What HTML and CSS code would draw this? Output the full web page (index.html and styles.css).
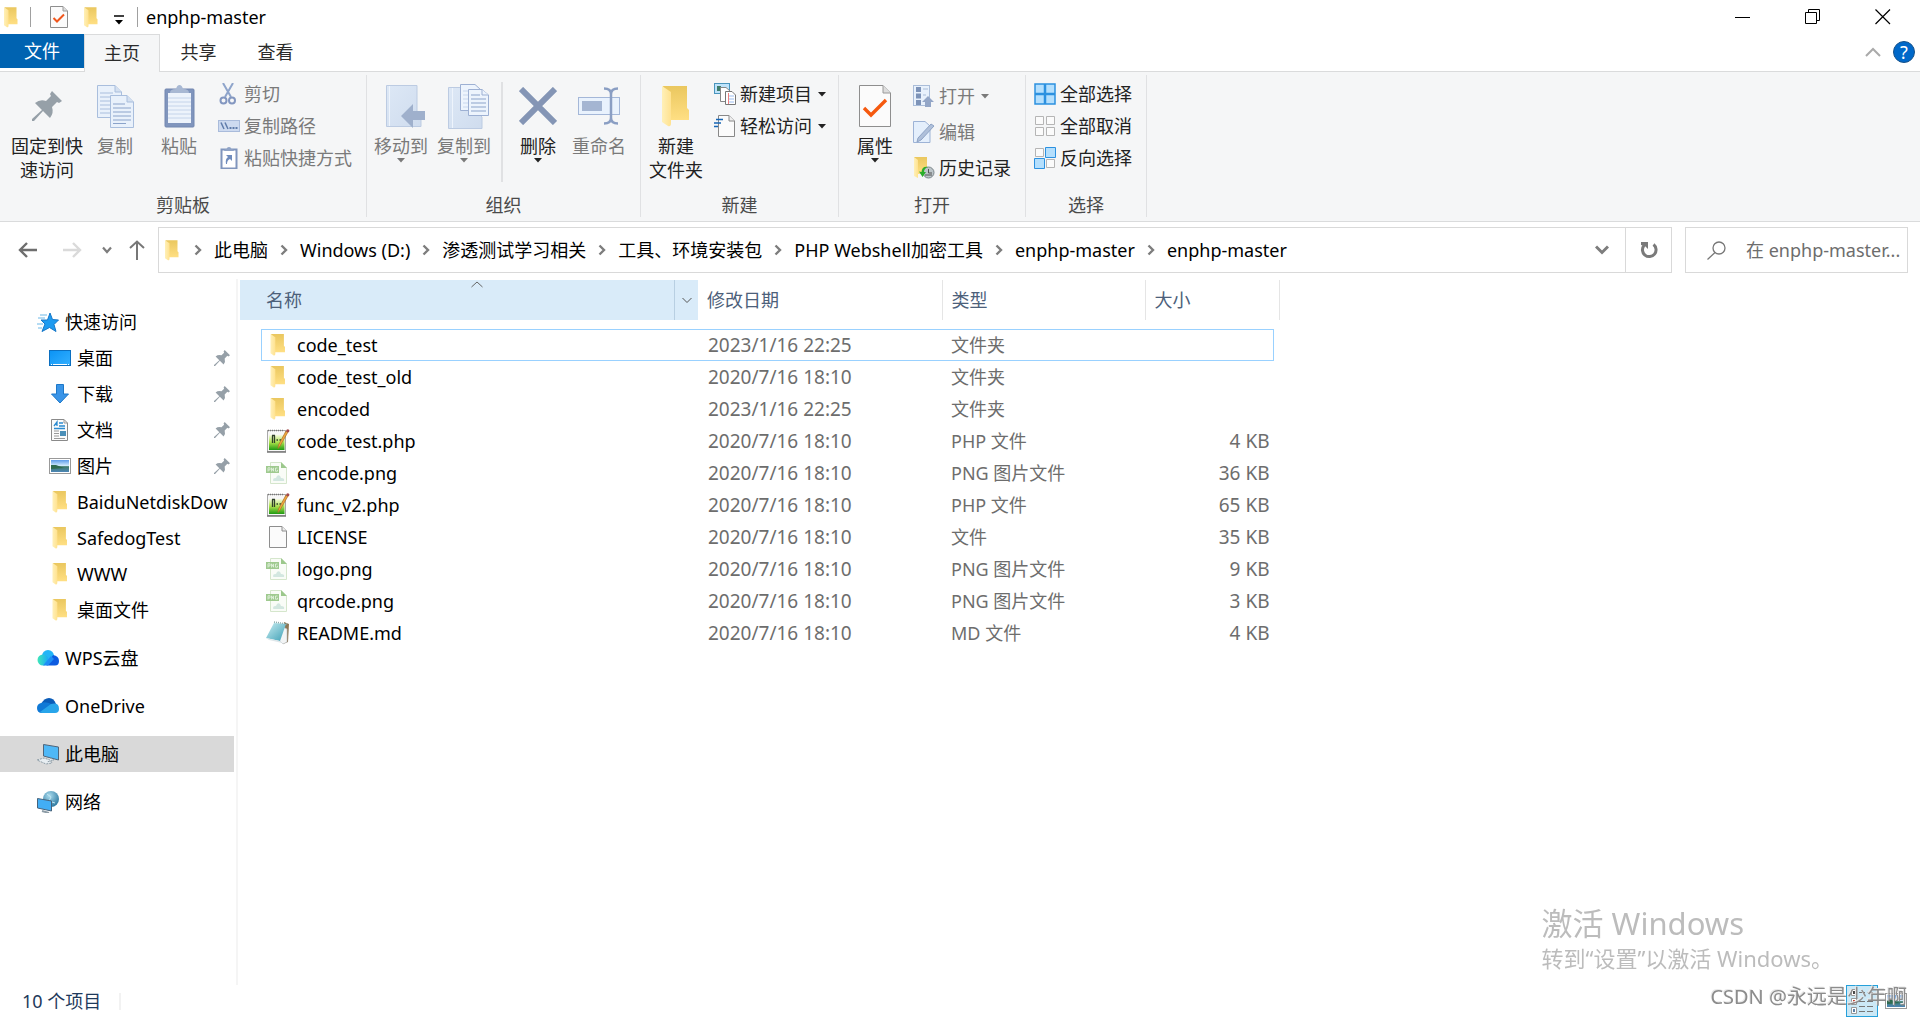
FILE: index.html
```html
<!DOCTYPE html>
<html lang="zh-CN">
<head>
<meta charset="utf-8">
<meta name="viewport" content="width=device-width, initial-scale=1">
<title>enphp-master</title>
<link rel="stylesheet" href="styles.css">
</head>
<body>
<svg class="defs" width="0" height="0" aria-hidden="true">
  <defs>
    <linearGradient id="gBack" x1="0" y1="0" x2="0" y2="1"><stop offset="0" stop-color="#eac75f"/><stop offset="1" stop-color="#ffdf83"/></linearGradient>
    <linearGradient id="gFlap" x1="0" y1="0" x2="1" y2="0"><stop offset="0" stop-color="#fff0b8"/><stop offset="1" stop-color="#ffe290"/></linearGradient>
    <linearGradient id="gBlue" x1="0" y1="0" x2="1" y2="1"><stop offset="0" stop-color="#0a93f5"/><stop offset="1" stop-color="#35b0ff"/></linearGradient>
    <linearGradient id="gGreen" x1="0" y1="0" x2="0" y2="1"><stop offset="0" stop-color="#f6fbe0"/><stop offset=".5" stop-color="#a9e04a"/><stop offset="1" stop-color="#1f9a12"/></linearGradient>
    <linearGradient id="gSky" x1="0" y1="0" x2="0" y2="1"><stop offset="0" stop-color="#5b9bea"/><stop offset=".5" stop-color="#d8efff"/><stop offset=".55" stop-color="#3f7a6a"/><stop offset="1" stop-color="#4d86b8"/></linearGradient>
    <linearGradient id="gPale" x1="0" y1="0" x2="1" y2="1"><stop offset="0" stop-color="#dde8f6"/><stop offset="1" stop-color="#cfdcee"/></linearGradient>
    <linearGradient id="gWps" x1="0" y1="0" x2="1" y2="0"><stop offset="0" stop-color="#3fe8b8"/><stop offset="1" stop-color="#1aa8f8"/></linearGradient>
    <linearGradient id="gPad" x1="0" y1="0" x2="1" y2="1"><stop offset="0" stop-color="#c9eef2"/><stop offset="1" stop-color="#3d9fb5"/></linearGradient>
    <radialGradient id="gGlobe" cx=".4" cy=".3" r=".8"><stop offset="0" stop-color="#a9dbee"/><stop offset="1" stop-color="#1f6d96"/></radialGradient>
  </defs>
  <symbol id="folder" viewBox="0 0 28 41"><path d="M1 0H25V22L27 24V34H8Z" fill="url(#gBack)"/><path d="M0 0L9 6V37Q9 41 6 40L0 36Z" fill="url(#gFlap)"/></symbol>
  <symbol id="pin" viewBox="0 0 30 30"><path d="M20 0L30 10L27 12L25 11L20 16Q22 22 18 27L11 20L2 30L0 30L0 28L10 19L3 12Q8 8 14 10L19 5L18 3Z" fill="#96a0a8"/></symbol>
  <symbol id="caret" viewBox="0 0 8 5"><path d="M0 0H8L4 4.500Z" fill="currentColor"/></symbol>
  <symbol id="chev" viewBox="0 0 8 12"><path d="M1.500 1.500L6 6L1.500 10.500" fill="none" stroke="#7d7d7d" stroke-width="2.400"/></symbol>
  <symbol id="props" viewBox="0 0 32 42"><path d="M.5.500H24L31.500 8V41.500H.5Z" fill="#fbfbfb" stroke="#8e8e8e"/><path d="M24 .5V8H31.500" fill="#ddd" stroke="#9a9a9a"/><path d="M5 23L12 30L27 15" fill="none" stroke="#f5590f" stroke-width="3.400"/></symbol>
  <symbol id="propsSmall" viewBox="0 0 18 22"><path d="M.5.500H13L17.500 5V21.500H.5Z" fill="#fbfbfb" stroke="#8e8e8e"/><path d="M13 .5V5H17.500" fill="#ddd" stroke="#9a9a9a"/><path d="M3.500 12L7 15.500L14 8.500" fill="none" stroke="#f0561c" stroke-width="2"/></symbol>
  <symbol id="page" viewBox="0 0 18 22"><path d="M.5.500H13L17.500 5V21.500H.5Z" fill="#fbfbfb" stroke="#8e8e8e"/><path d="M13 .5V5H17.500" fill="#eee" stroke="#8e8e8e"/></symbol>
  <symbol id="php" viewBox="0 0 24 24"><rect x="1.500" y="1.500" width="18" height="21" fill="#f7f7f7" stroke="#aaa"/><path d="M2 1.500H17" stroke="#777" stroke-width="1.500" stroke-dasharray="1 1"/><rect x="3" y="6" width="15.500" height="15" fill="url(#gGreen)"/><path d="M6.500 6.500V14M8.500 6.500V14M6 6.500H9M10.500 11H12M13.500 11H15" stroke="#30402a" stroke-width="1.300"/><path d="M22 3L14 17L12 19.500L12.500 16L20 2Z" fill="#f2a73d" stroke="#a8702a" stroke-width=".7"/><circle cx="21.800" cy="1.800" r="1.600" fill="#a34a4a"/><path d="M1 23H20" stroke="#777" stroke-width="1.500"/></symbol>
  <symbol id="png" viewBox="0 0 24 24"><path d="M4.500 1.500H15L20.500 7V22.500H4.500Z" fill="#f9fcf7" stroke="#d5e6cc"/><path d="M15 1V7H21Z" fill="#9cc88c"/><rect x="0" y="5" width="13" height="7" fill="#9fca8f"/><path d="M2 10.500V6.800H4V9H2M5.500 10.500V6.800L7.500 10.200V6.800M11.500 7H9.500V10.200H11.500V8.800" stroke="#e9f5e4" fill="none" stroke-width=".8"/><path d="M8 20Q6 20 8 17Q10 18 11 15Q14 13 15 17Q19 17 18 20Z" fill="#d3e7e0"/></symbol>
  <symbol id="md" viewBox="0 0 24 24"><path d="M18 1L23 3L22 21L17 23Z" fill="#8d7654"/><path d="M15 5L21 8V21L17 23L13 19Z" fill="#f2f4f5" stroke="#b8c0c4" stroke-width=".6"/><path d="M8 2L20 3L14 20L0 17Z" fill="url(#gPad)"/><path d="M8 1L21 3" stroke="#8aa" stroke-width="1.500" stroke-dasharray="1 1"/><path d="M0 17L14 20L16 22L3 19Z" fill="#dfe7ea"/></symbol>
  <symbol id="picture" viewBox="0 0 22 16"><rect x=".5" y=".5" width="21" height="15" fill="#fff" stroke="#999"/><rect x="2" y="2" width="18" height="12" fill="url(#gSky)"/><path d="M2 7L7 7L15 10L2 11Z" fill="#2f6b50"/></symbol>
</svg>

<header class="titlebar">
  <svg class="i-folder"><use href="#folder"/></svg>
  <span class="bar-sep after-app"></span>
  <button class="plain quick" aria-label="属性"><svg width="18" height="22"><use href="#propsSmall"/></svg></button>
  <button class="plain quick" aria-label="新建文件夹"><svg class="i-folder"><use href="#folder"/></svg></button>
  <button class="plain customize" aria-label="自定义快速访问工具栏"><svg width="10" height="10" viewBox="0 0 10 10"><path d="M0 1H10" stroke="#000" stroke-width="1.500"/><path d="M1 5H9L5 9.500Z"/></svg></button>
  <span class="bar-sep"></span>
  <h1 class="title">enphp-master</h1>
  <div class="window-controls">
    <button class="plain" aria-label="最小化"><svg width="16" height="16" viewBox="0 0 16 16"><path d="M0 8.500H15" stroke="#000"/></svg></button>
    <button class="plain" aria-label="向下还原"><svg width="16" height="16" viewBox="0 0 16 16" fill="none" stroke="#000"><path d="M.5 3.500H11.500V14.500H.5ZM3.500 3V.5H14.500V11.500H12"/></svg></button>
    <button class="plain" aria-label="关闭"><svg width="16" height="16" viewBox="0 0 16 16"><path d="M.5.500L15 15M15 .5L.5 15" stroke="#000" stroke-width="1.200"/></svg></button>
  </div>
</header>

<nav class="tabs" aria-label="功能区">
  <button class="tab file">文件</button>
  <button class="tab active">主页</button>
  <button class="tab">共享</button>
  <button class="tab">查看</button>
  <div class="tab-tools">
    <button class="plain" aria-label="最小化功能区"><svg width="16" height="10" viewBox="0 0 16 10"><path d="M1 9L8 2L15 9" fill="none" stroke="#aaa" stroke-width="2"/></svg></button>
    <button class="plain help" aria-label="帮助">?</button>
  </div>
</nav>

<section class="ribbon">
  <div class="group clipboard">
    <div class="tools">
      <button class="big"><span class="art"><svg width="30" height="30"><use href="#pin"/></svg></span><span>固定到快<br>速访问</span></button>
      <button class="big off"><span class="art"><svg width="37" height="43" viewBox="0 0 37 43"><g fill="#e9f1fb" stroke="#a9bedd"><path d="M.5.500H18L24.500 7V32.500H.5Z"/><path d="M18 .5V7H24.500" fill="#d4e0f0"/><path d="M3 8H16M3 12H16M3 16H14M3 20H14M3 24H14M3 28H14"/><path d="M13.500 10.500H30L36.500 17V42.500H13.500Z"/><path d="M30 10.500V17H36.500" fill="#d4e0f0"/><path d="M16 19H28M16 23H34M16 27H34M16 31H34M16 35H34M16 38.500H29" stroke="#8ba3ca"/></g></svg></span><span>复制</span></button>
      <button class="big off"><span class="art"><svg width="31" height="43" viewBox="0 0 31 43"><rect x="1" y="4" width="29" height="38" rx="1" fill="#8095bd" stroke="#7387b0"/><rect x="4" y="8" width="23" height="30" fill="#edf3fb"/><path d="M4 13H27M4 17H27M4 21H27M4 25H27M4 29H27M4 33H27" stroke="#c5d4ea"/><path d="M6 8Q6 4 12 4Q13 0 15.500 0Q18 0 19 4Q25 4 25 8Z" fill="#a8b8d3"/></svg></span><span>粘贴</span></button>
      <div class="list">
        <button class="small off"><svg width="22" height="22" viewBox="0 0 22 22"><path d="M5 0L13 14M15 0L7 14" stroke="#8fa5cb" stroke-width="2"/><circle cx="5.500" cy="17.500" r="3" fill="none" stroke="#8397c0" stroke-width="2"/><circle cx="14" cy="17.500" r="3" fill="none" stroke="#8397c0" stroke-width="2"/></svg>剪切</button>
        <button class="small off"><svg width="22" height="22" viewBox="0 0 22 22"><rect x=".5" y="5.500" width="21" height="11" fill="#cddaf0" stroke="#a9bbdb"/><path d="M3 7.500L6 14M7 7.500L10 14" stroke="#5f7cab" stroke-width="1.500"/><path d="M11.500 13H20" stroke="#5f7cab" stroke-width="2" stroke-dasharray="2 1"/></svg>复制路径</button>
        <button class="small off"><svg width="22" height="22" viewBox="0 0 22 22"><rect x="3.500" y="2.500" width="15" height="19" fill="#fff" stroke="#8095bd" stroke-width="2"/><path d="M6 4Q6 2 8.500 2Q9 0 11 0Q13 0 13.500 2Q16 2 16 4Z" fill="#8fa3c6"/><path d="M8 8H14V14L12 12Q9 13 9 17H8Q7 12 10 10Z" fill="#6f8cbd"/></svg>粘贴快捷方式</button>
      </div>
    </div>
    <div class="group-name">剪贴板</div>
  </div>

  <div class="group organize">
    <div class="tools">
      <button class="big off"><span class="art wide"><svg width="40" height="44" viewBox="0 0 40 44"><path d="M.5 1.500H31V27L35 31V42.500H.5Z" fill="url(#gPale)" stroke="#bccbe2"/><path d="M3.500 2V42" stroke="#eef4fc"/><path d="M15 32L27 20V27H39V36H27V44Z" fill="#9fb0cc"/></svg></span><span>移动到</span><svg class="caret"><use href="#caret"/></svg></button>
      <button class="big off"><span class="art wide"><svg width="42" height="46" viewBox="0 0 42 46"><path d="M.5 4.500H30V30L34 34V45.500H.5Z" fill="url(#gPale)" stroke="#bccbe2"/><path d="M4.500 5V45" stroke="#eef4fc"/><g fill="#edf4fd" stroke="#9db0d3"><path d="M12.500 1.500H27L33 7V27.500H12.500Z"/><path d="M15 8H24M15 12H20M15 16H20M15 20H20M15 24H20" stroke="#c8d7ee"/><path d="M20.500 6.500H34L40.500 12V32.500H20.500Z"/><path d="M34 6.500V12H40.500"/><path d="M23 12H32M23 16H38M23 20H38M23 24H38M23 28H38" stroke="#8ba3ca"/></g></svg></span><span>复制到</span><svg class="caret"><use href="#caret"/></svg></button>
      <span class="tool-sep"></span>
      <button class="big"><span class="art"><svg width="38" height="38" viewBox="0 0 38 38"><path d="M2 2L36 36M36 2L2 36" stroke="#8495b5" stroke-width="6"/></svg></span><span>删除</span><svg class="caret"><use href="#caret"/></svg></button>
      <button class="big off"><span class="art"><svg width="42" height="38" viewBox="0 0 42 38"><rect x=".5" y="10.500" width="41" height="17" fill="#e9f2fd" stroke="#a4b7d8"/><rect x="4" y="14" width="20" height="10" fill="#a4b5d2"/><path d="M26 1.500Q33 1.500 33 7V31Q33 36.500 26 36.500M40 1.500Q33 1.500 33 7M33 31Q33 36.500 40 36.500" fill="none" stroke="#8a9ec3" stroke-width="2.500"/></svg></span><span>重命名</span></button>
    </div>
    <div class="group-name">组织</div>
  </div>

  <div class="group create">
    <div class="tools">
      <button class="big"><span class="art"><svg width="28" height="41"><use href="#folder"/></svg></span><span>新建<br>文件夹</span></button>
      <div class="list">
        <button class="small"><svg width="22" height="22" viewBox="0 0 22 22"><rect x=".5" y=".5" width="15" height="10" fill="#bfe3fb" stroke="#4a95bd"/><rect x="3" y="3" width="4" height="5" fill="#3f7d6a"/><path d="M6.500 4.500H12L16 8V18.500H6.500Z" fill="#fff" stroke="#888"/><path d="M11.500 8.500H18L21.500 12V21.500H11.500Z" fill="#fff" stroke="#777"/><path d="M14 13H20M14 16H20M14 19H20" stroke="#9bbdf0"/><path d="M14.500 10V21" stroke="#f08080"/></svg>新建项目<svg class="caret"><use href="#caret"/></svg></button>
        <button class="small"><svg width="22" height="22" viewBox="0 0 22 22"><path d="M4.500.500H15L20.500 6V21.500H4.500Z" fill="#fbfbfb" stroke="#888"/><path d="M15 .5V6H20.500" fill="#eee" stroke="#888"/><path d="M2 4.500H9M0 8H7M0 11.500H4" stroke="#1766b5" stroke-width="1.500"/></svg>轻松访问<svg class="caret"><use href="#caret"/></svg></button>
      </div>
    </div>
    <div class="group-name">新建</div>
  </div>

  <div class="group open">
    <div class="tools">
      <button class="big"><span class="art"><svg width="32" height="42"><use href="#props"/></svg></span><span>属性</span><svg class="caret"><use href="#caret"/></svg></button>
      <div class="list roomy">
        <button class="small off"><svg width="22" height="22" viewBox="0 0 22 22"><rect x=".5" y=".5" width="16" height="20" fill="#e8f1fc" stroke="#aabdd9"/><path d="M3 2H8V7H3ZM3 8.500H8V13.500H3ZM3 15H8V20H3Z" fill="#7d93b8"/><path d="M10 4H15M10 10H13" stroke="#a9bcd8"/><path d="M15 11L21 17H18V22H12V17H9Z" fill="#93a6c7"/></svg>打开<svg class="caret"><use href="#caret"/></svg></button>
        <button class="small off"><svg width="22" height="22" viewBox="0 0 22 22"><path d="M.5.500H12L17 5V21.500H.5Z" fill="#e4effc" stroke="#9db3d6"/><path d="M18 3L21 5L8 19L4 21L5 17Z" fill="#afc0da" stroke="#8ea3c5"/></svg>编辑</button>
        <button class="small"><svg width="22" height="22" viewBox="0 0 22 22"><path d="M1 0H14V17H1Z" fill="url(#gBack)"/><path d="M1 0L5 3V21L1 19Z" fill="url(#gFlap)"/><circle cx="15.500" cy="15.500" r="5.500" fill="#bcc5c9" stroke="#7c868b"/><path d="M15.500 12V16H19M12 18L19 18" stroke="#555" fill="none"/><path d="M15 10Q9 9 8.500 15L6 14.500L9.500 20L13 15H11Q11 11 15 10Z" fill="#2aae2a"/></svg>历史记录</button>
      </div>
    </div>
    <div class="group-name">打开</div>
  </div>

  <div class="group select">
    <div class="tools">
      <div class="list">
        <button class="small"><svg width="22" height="22" viewBox="0 0 22 22"><g fill="#b4dffd" stroke="#2c91e0" stroke-width="1.500"><path d="M1 1H10.500V10.500H1ZM11.500 1H21V10.500H11.500ZM1 11.500H10.500V21H1ZM11.500 11.500H21V21H11.500Z"/></g></svg>全部选择</button>
        <button class="small"><svg width="22" height="22" viewBox="0 0 22 22"><g fill="#fbfbfb" stroke="#b5b5b5"><path d="M1.500 1.500H9.500V9.500H1.500ZM12.500 1.500H20.500V9.500H12.500ZM1.500 12.500H9.500V20.500H1.500ZM12.500 12.500H20.500V20.500H12.500Z"/></g></svg>全部取消</button>
        <button class="small"><svg width="22" height="22" viewBox="0 0 22 22"><g fill="#fbfbfb" stroke="#b5b5b5"><path d="M1.500 1.500H9.500V9.500H1.500ZM12.500 12.500H20.500V20.500H12.500Z"/></g><g fill="#b4dffd" stroke="#2c91e0"><path d="M11.500.500H21.500V10.500H11.500ZM.5 11.500H10.500V21.500H.5Z"/></g></svg>反向选择</button>
      </div>
    </div>
    <div class="group-name">选择</div>
  </div>
</section>

<div class="address-row">
  <div class="history">
    <button class="plain" aria-label="后退"><svg width="20" height="18" viewBox="0 0 20 18"><path d="M9 2L2 9L9 16M2 9H19" fill="none" stroke="#6e6e6e" stroke-width="2.400"/></svg></button>
    <button class="plain" aria-label="前进"><svg width="20" height="18" viewBox="0 0 20 18"><path d="M11 2L18 9L11 16M18 9H1" fill="none" stroke="#dadada" stroke-width="2.400"/></svg></button>
    <button class="plain" aria-label="最近浏览的位置"><svg width="10" height="8" viewBox="0 0 10 8"><path d="M1 1.500L5 6L9 1.500" fill="none" stroke="#7d7d7d" stroke-width="2.200"/></svg></button>
    <button class="plain" aria-label="上移"><svg width="16" height="20" viewBox="0 0 16 20"><path d="M1 8L8 1.500L15 8M8 2V20" fill="none" stroke="#777" stroke-width="2"/></svg></button>
  </div>
  <div class="address">
    <svg class="i-folder"><use href="#folder"/></svg>
    <ol class="crumbs">
      <li><svg class="chev"><use href="#chev"/></svg><a href="#">此电脑</a></li>
      <li><svg class="chev"><use href="#chev"/></svg><a href="#">Windows (D:)</a></li>
      <li><svg class="chev"><use href="#chev"/></svg><a href="#">渗透测试学习相关</a></li>
      <li><svg class="chev"><use href="#chev"/></svg><a href="#">工具、环境安装包</a></li>
      <li><svg class="chev"><use href="#chev"/></svg><a href="#">PHP Webshell加密工具</a></li>
      <li><svg class="chev"><use href="#chev"/></svg><a href="#">enphp-master</a></li>
      <li><svg class="chev"><use href="#chev"/></svg><a href="#">enphp-master</a></li>
    </ol>
    <button class="plain recent" aria-label="以前的位置"><svg width="14" height="10" viewBox="0 0 14 10"><path d="M1 1.500L7 7.500L13 1.500" fill="none" stroke="#7d7d7d" stroke-width="3"/></svg></button>
    <button class="plain refresh" aria-label="刷新"><svg width="18" height="18" viewBox="0 0 18 18"><path d="M13.500 3.500A6.800 6.800 0 1 1 4 4.500" fill="none" stroke="#7a7a7a" stroke-width="3"/><path d="M1 1H8V8L5.500 5.500L1 4Z" fill="#7a7a7a"/></svg></button>
  </div>
  <label class="search">
    <svg width="19" height="19" viewBox="0 0 19 19" aria-hidden="true"><circle cx="12" cy="7" r="6" fill="none" stroke="#777" stroke-width="1.300"/><path d="M8 11.500L.5 18.500" stroke="#777" stroke-width="1.300"/></svg>
    <input type="text" placeholder="在 enphp-master..." aria-label="搜索">
  </label>
</div>

<main class="content">
  <nav class="sidebar" aria-label="导航窗格">
    <ul>
      <li><a href="#"><svg class="ic" viewBox="0 0 22 22"><path d="M13 2L15.500 8.500L21.500 9L17 13.500L19 20.500L12.500 16.500L5 20.500L8 13L4 9H10.500Z" fill="#1e9bf0" stroke="#1677c8"/><path d="M3 4H10M1 7H8M0 13H6M1 17H5" stroke="#6db9e8"/></svg>快速访问</a>
        <ul class="sub">
          <li><a href="#"><svg class="ic" viewBox="0 0 22 22"><rect x=".5" y="3.500" width="21" height="15" fill="url(#gBlue)" stroke="#0b6fc0"/><path d="M2 17.500H20" stroke="#fff" stroke-dasharray="1 1 14 1"/></svg>桌面<svg class="pin"><use href="#pin"/></svg></a></li>
          <li><a href="#"><svg class="ic" viewBox="0 0 22 22"><path d="M7.500 1.500H14.500V11H19.500L11 20L2.500 11H7.500Z" fill="#3a95e8" stroke="#1d78c9"/></svg>下载<svg class="pin"><use href="#pin"/></svg></a></li>
          <li><a href="#"><svg class="ic" viewBox="0 0 22 22"><path d="M2.500.500H15L18.500 4V21.500H2.500Z" fill="#fbfbfb" stroke="#8a8a8a"/><path d="M15 .5V4H18.500" fill="none" stroke="#999"/><path d="M5 7L8 3V7M10 4H14M10 7H16M5 9.500H16" stroke="#2c8bd0" fill="none" stroke-width="1.300"/><path d="M5 12H10M5 14.500H10M5 17H10M5 19.500H16" stroke="#999"/><rect x="11" y="12" width="6" height="5" fill="#4b8fb8"/></svg>文档<svg class="pin"><use href="#pin"/></svg></a></li>
          <li><a href="#"><svg class="ic" viewBox="0 -3 22 22"><use href="#picture" width="22" height="16"/></svg>图片<svg class="pin"><use href="#pin"/></svg></a></li>
          <li><a href="#"><svg class="ic"><use href="#folder"/></svg>BaiduNetdiskDow</a></li>
          <li><a href="#"><svg class="ic"><use href="#folder"/></svg>SafedogTest</a></li>
          <li><a href="#"><svg class="ic"><use href="#folder"/></svg>WWW</a></li>
          <li><a href="#"><svg class="ic"><use href="#folder"/></svg>桌面文件</a></li>
        </ul>
      </li>
      <li><a href="#"><svg class="ic" viewBox="0 0 22 22"><circle cx="11" cy="9" r="6" fill="#23b5f7"/><path d="M10 18L16 8Q22 9 22 14Q22 18.500 18 18.500H9Z" fill="#0d5be0"/><circle cx="6" cy="13" r="5.500" fill="url(#gWps)"/><path d="M6 18.500L14 9L17 12L11 18.500Z" fill="#1e8df5"/></svg>WPS云盘</a></li>
      <li><a href="#"><svg class="ic" viewBox="0 0 22 22"><path d="M4 9Q7 3 12 3Q17 3 19 9L12 13Z" fill="#0a5cb8"/><path d="M4 8Q0 9 0 13Q0 18 5 18L16 10Q10 6 4 8Z" fill="#1079d6"/><path d="M3 17L14 9Q22 7 22 14Q22 18 18 18H5Z" fill="#28a5ea"/></svg>OneDrive</a></li>
      <li><a href="#" class="current"><svg class="ic" viewBox="0 0 22 22"><path d="M6.500 1.500L21.500 4V17L6.500 13Z" fill="#4fb8f7" stroke="#50657a"/><path d="M13 15L17 17L10 19M0 17L7 15L13 17L15 20L9 21Z" fill="#e8eef2" stroke="#8d9ca6" stroke-dasharray="2 1"/></svg>此电脑</a></li>
      <li><a href="#"><svg class="ic" viewBox="0 0 22 22"><circle cx="14" cy="8" r="8" fill="url(#gGlobe)"/><path d="M10 3L14 6L12 10L18 12" stroke="#bfe4f0" fill="none"/><path d="M.5 7.500L14.500 10V20L.5 17Z" fill="#42aef5" stroke="#47627a"/><path d="M5 20L12 22" stroke="#8d9ca6" stroke-width="2"/></svg>网络</a></li>
    </ul>
  </nav>

  <section class="files">
    <table>
      <colgroup><col class="c-name"><col class="c-date"><col class="c-type"><col class="c-size"></colgroup>
      <thead>
        <tr>
          <th scope="col" class="sorted"><span class="head">名称<svg class="sort" width="12" height="7" viewBox="0 0 12 7"><path d="M.5 6L6 1L11.500 6" fill="none" stroke="#666"/></svg><button class="plain filter" aria-label="筛选"><svg width="10" height="7" viewBox="0 0 10 7"><path d="M.5 1L5 5.500L9.500 1" fill="none" stroke="#555"/></svg></button></span></th>
          <th scope="col">修改日期</th>
          <th scope="col">类型</th>
          <th scope="col">大小</th>
        </tr>
      </thead>
      <tbody>
        <tr class="focus"><td><span class="name"><svg><use href="#folder"/></svg>code_test</span></td><td>2023/1/16 22:25</td><td>文件夹</td><td></td></tr>
        <tr><td><span class="name"><svg><use href="#folder"/></svg>code_test_old</span></td><td>2020/7/16 18:10</td><td>文件夹</td><td></td></tr>
        <tr><td><span class="name"><svg><use href="#folder"/></svg>encoded</span></td><td>2023/1/16 22:25</td><td>文件夹</td><td></td></tr>
        <tr><td><span class="name"><svg class="full"><use href="#php"/></svg>code_test.php</span></td><td>2020/7/16 18:10</td><td>PHP 文件</td><td>4 KB</td></tr>
        <tr><td><span class="name"><svg class="full"><use href="#png"/></svg>encode.png</span></td><td>2020/7/16 18:10</td><td>PNG 图片文件</td><td>36 KB</td></tr>
        <tr><td><span class="name"><svg class="full"><use href="#php"/></svg>func_v2.php</span></td><td>2020/7/16 18:10</td><td>PHP 文件</td><td>65 KB</td></tr>
        <tr><td><span class="name"><svg><use href="#page"/></svg>LICENSE</span></td><td>2020/7/16 18:10</td><td>文件</td><td>35 KB</td></tr>
        <tr><td><span class="name"><svg class="full"><use href="#png"/></svg>logo.png</span></td><td>2020/7/16 18:10</td><td>PNG 图片文件</td><td>9 KB</td></tr>
        <tr><td><span class="name"><svg class="full"><use href="#png"/></svg>qrcode.png</span></td><td>2020/7/16 18:10</td><td>PNG 图片文件</td><td>3 KB</td></tr>
        <tr><td><span class="name"><svg class="full"><use href="#md"/></svg>README.md</span></td><td>2020/7/16 18:10</td><td>MD 文件</td><td>4 KB</td></tr>
      </tbody>
    </table>
  </section>
</main>

<footer class="status">
  <span class="count">10 个项目</span>
  <span class="status-sep"></span>
  <div class="views">
    <button class="plain details" aria-label="详细信息"><svg width="22" height="27" viewBox="0 0 22 27"><g fill="#fff" stroke="#999"><path d="M.5 1.500H5.500V7.500H.5ZM.5 10.500H5.500V16.500H.5ZM.5 19.500H5.500V25.500H.5Z"/></g><path d="M2 3H4V6H2Z" fill="#444"/><path d="M2 12H4V15H2Z" fill="#c0392b"/><path d="M2 21H4V24H2Z" fill="#5b7fa5"/><path d="M8 4.500H22M8 13.500H22M8 18.500H22M8 23.500H22" stroke="#777" stroke-dasharray="6 2"/></svg></button>
    <button class="plain" aria-label="大图标"><svg width="22" height="16"><use href="#picture"/></svg></button>
  </div>
</footer>

<aside class="activation">
  <p class="activation-title">激活 Windows</p>
  <p class="activation-text">转到“设置”以激活 Windows。</p>
</aside>
<div class="credit">CSDN @永远是少年啊</div>
</body>
</html>
```
FILE: styles.css
```css
* { box-sizing: border-box; }

body {
  display: flex;
  flex-direction: column;
  min-height: 100vh;
  margin: 0;
  background: #fff;
  color: #000;
  font: 18px/24px "Noto Sans", "Noto Sans CJK SC", sans-serif;
  white-space: nowrap;
}

ul, ol { margin: 0; padding: 0; list-style: none; }
p { margin: 0; }
a { color: inherit; text-decoration: none; }
svg { flex: none; display: block; }
.defs { position: absolute; }

button {
  padding: 0;
  border: 0;
  background: none;
  color: inherit;
  font: inherit;
}

.plain {
  display: flex;
  align-items: center;
  justify-content: center;
}

.i-folder { width: 14px; height: 21px; }

/* Title bar */
.titlebar {
  display: flex;
  align-items: center;
  height: 34px;
  padding-left: 4px;
}
.bar-sep { width: 1px; height: 20px; background: #a0a0a0; }
.after-app { margin: 0 12px; }
.quick { width: 32px; height: 34px; }
.customize { width: 30px; height: 34px; padding: 6px 6px 0 0; }
.title { margin: 0 0 0 8px; font-size: 18px; font-weight: 400; line-height: 24px; }
.window-controls { display: flex; margin: 0 2px 0 auto; }
.window-controls .plain { width: 70px; height: 34px; }

/* Ribbon tabs */
.tabs {
  display: flex;
  height: 38px;
  border-bottom: 1px solid #dadbdc;
}
.tab { width: 77px; height: 36px; color: #2b2b2b; }
.tab.file { width: 84px; height: 34px; background: #0063b1; color: #fff; }
.tab.active {
  width: 76px;
  height: 38px;
  padding-bottom: 2px;
  border: 1px solid #dadbdc;
  border-bottom: 0;
  background: #f5f6f7;
}
.tab-tools { display: flex; align-items: center; gap: 12px; margin-left: auto; padding: 0 5px 2px 0; }
.help {
  width: 22px;
  height: 22px;
  border: 1px solid #17528a;
  border-radius: 50%;
  background: #0068c9;
  color: #fff;
  line-height: 20px;
}

/* Ribbon */
.ribbon {
  display: flex;
  padding: 3px 0 4px;
  border-bottom: 1px solid #dadbdc;
  background: #f5f6f7;
  color: #222;
}
.group {
  display: flex;
  flex-direction: column;
  border-right: 1px solid #e0e1e3;
}
.tools { display: grid; height: 118px; padding-right: 14px; }
.clipboard .tools { grid-template-columns: 70px 66px 62px auto; padding-left: 12px; }
.organize .tools { grid-template-columns: 68px 58px 17px 56px 66px; padding-right: 8px; }
.create .tools { grid-template-columns: 60px auto; padding: 0 12px 0 5px; }
.open .tools { grid-template-columns: 60px auto; padding-left: 6px; }
.group-name { color: #4a4a4a; text-align: center; }
.off { color: #7a7a7a; }

.big {
  display: flex;
  flex-direction: column;
  align-items: center;
  align-self: start;
  padding-top: 9px;
}
.art { display: flex; align-items: center; justify-content: center; height: 44px; margin-bottom: 6px; }
.wide { padding-left: 10px; }
.caret { width: 8px; height: 5px; }
.tool-sep { justify-self: center; width: 2px; height: 100px; margin-top: 7px; background: #e0e1e3; }

.list { display: flex; flex-direction: column; align-items: flex-start; padding: 3px 0 0 8px; }
.small { display: flex; align-items: center; gap: 4px; height: 32px; }
.small .caret { margin-left: 2px; }
.roomy .small { height: 36px; }

/* Address row */
.address-row { display: flex; gap: 13px; padding: 5px 12px 6px 0; }
.history { display: flex; width: 145px; padding-left: 14px; }
.history .plain { width: 30px; }
.history .plain:nth-child(2) { margin-left: 16px; }
.history .plain:nth-child(3) { width: 38px; }
.history .plain:nth-child(4) { width: 24px; }
.address {
  display: flex;
  flex: 1;
  align-items: center;
  min-width: 0;
  height: 46px;
  padding-left: 6px;
  border: 1px solid #d9d9d9;
}
.crumbs { display: flex; flex: 1; min-width: 0; margin-left: 3px; overflow: hidden; }
.crumbs li { display: flex; align-items: center; }
.chev { width: 8px; height: 12px; margin: 0 12px; }
.recent { width: 46px; height: 44px; }
.refresh { width: 46px; height: 44px; border-left: 1px solid #d9d9d9; }
.search {
  display: flex;
  align-items: center;
  gap: 20px;
  width: 223px;
  padding-left: 21px;
  border: 1px solid #d9d9d9;
}
.search input {
  flex: 1;
  min-width: 0;
  padding: 0;
  border: 0;
  outline: 0;
  background: none;
  font: inherit;
}
.search input::placeholder { color: #6d6d6d; opacity: 1; }

.history .plain:nth-child(n + 3) svg { margin-left: 8px; }

/* Main area */
.content { display: flex; flex: 1; }
.sidebar {
  width: 238px;
  padding: 25px 2px 0 0;
  border-right: 2px solid #f5f5f5;
}
.sidebar > ul { display: flex; flex-direction: column; gap: 12px; }
.sidebar a {
  display: flex;
  align-items: center;
  gap: 6px;
  height: 36px;
  padding-left: 37px;
  overflow: hidden;
}
.sidebar .sub a { padding-left: 49px; }
.sidebar .current { background: #d9d9d9; }
.ic { width: 22px; height: 22px; }
.pin { width: 16px; height: 16px; margin: 0 4px 0 auto; }

.files { flex: 1; min-width: 0; padding: 1px 0 0 2px; }
table { width: 1040px; border-collapse: collapse; table-layout: fixed; }
.c-name { width: 458px; }
.c-date { width: 244px; }
.c-type { width: 203px; }
th {
  height: 40px;
  padding: 0 0 0 9px;
  border-right: 1px solid #e5e5e5;
  color: #4c607a;
  font-weight: 400;
  text-align: left;
}
th.sorted { padding: 0; border: 0; background: #d9ebf9; }
.head {
  display: grid;
  grid-template-columns: 1fr auto 1fr;
  align-items: center;
  height: 40px;
  padding-left: 26px;
}
.sort { align-self: start; margin: 1px 10px 0 0; }
.filter { justify-self: end; width: 24px; height: 40px; border-left: 1px solid #b8cfe2; }
tbody::before { content: ""; display: block; height: 9px; }
td { height: 32px; padding: 0 0 0 9px; color: #6d6d6d; }
td:first-child { padding-left: 21px; color: #000; }
td:nth-child(2) { padding-left: 10px; font-size: 19px; }
td:last-child { padding: 0 10px 0 0; font-size: 19px; text-align: right; }
.name {
  display: flex;
  align-items: center;
  gap: 7px;
  height: 32px;
  padding-left: 5px;
}
.name svg { width: 24px; height: 22px; }
.name .full { height: 24px; }
.focus td { background: linear-gradient(#99d1ff, #99d1ff) top / 100% 1px no-repeat, linear-gradient(#99d1ff, #99d1ff) bottom / 100% 1px no-repeat; }
.focus td:first-child { background: none; }
.focus .name { border: 1px solid #99d1ff; border-right: 0; padding-left: 4px; }
.focus td:last-child { background: linear-gradient(#99d1ff, #99d1ff) left top / 129px 1px no-repeat, linear-gradient(#99d1ff, #99d1ff) left bottom / 129px 1px no-repeat, linear-gradient(#99d1ff, #99d1ff) 128px 0 / 1px 100% no-repeat; }

/* Status bar */
.status { display: flex; align-items: center; height: 32px; padding: 0 13px 0 22px; color: #1e395b; }
.status-sep { width: 2px; height: 17px; margin-left: 18px; background: #f2f2f2; }
.views { display: flex; gap: 7px; margin-left: auto; }
.details { width: 32px; height: 32px; border: 1px solid #26a0da; background: #cbe8f6; }

/* Overlays */
.activation { position: fixed; right: 87px; bottom: 44px; color: #bcbcbc; }
.activation-title { font-size: 31px; line-height: 40px; }
.activation-text { font-size: 22px; line-height: 30px; }
.credit {
  position: fixed;
  right: 13px;
  bottom: 8px;
  color: #8c8c8c;
  font-size: 20px;
  text-shadow: -1px -1px 0 #e8e8e8;
}
```
